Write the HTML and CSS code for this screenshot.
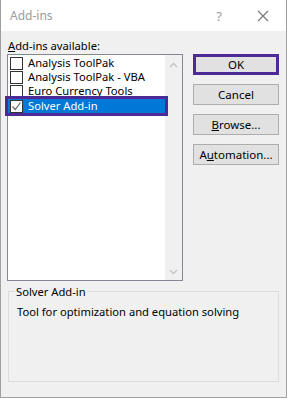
FILE: index.html
```html
<!DOCTYPE html>
<html lang="en">
  <head>
    <meta charset="utf-8" />
    <link rel="stylesheet" href="styles.css">
  </head>
  <body>
    <div class="dialog">
      <header class="titlebar">
        <span class="title">Add-ins</span>
        <span class="help">?</span>
        <svg class="close" width="12" height="12" viewBox="0 0 12 12">
          <path d="M1 1 L11 11 M11 1 L1 11" stroke="#777" stroke-width="1.2" fill="none" />
        </svg>
      </header>
      <main class="content">
        <div class="top">
          <section class="available">
            <div class="label"><u>A</u>dd-ins available:</div>
            <div class="listbox">
              <ul class="items">
                <li class="item"><span class="check"></span>Analysis ToolPak</li>
                <li class="item"><span class="check"></span>Analysis ToolPak - VBA</li>
                <li class="item"><span class="check"></span>Euro Currency Tools</li>
                <li class="item selected"><span class="check checked">
                  <svg width="11" height="11" viewBox="0 0 11 11"><path d="M1.5 5.5 L4.3 8.5 L9.5 1.5" stroke="#666" stroke-width="1.2" fill="none" /></svg>
                </span>Solver Add-in</li>
              </ul>
              <div class="scrollbar">
                <svg width="9" height="6" viewBox="0 0 9 6"><path d="M1 5 L4.5 1.5 L8 5" stroke="#c2c2c2" stroke-width="1.3" fill="none" /></svg>
                <svg width="9" height="6" viewBox="0 0 9 6"><path d="M1 1 L4.5 4.5 L8 1" stroke="#c2c2c2" stroke-width="1.3" fill="none" /></svg>
              </div>
            </div>
          </section>
          <div class="buttons">
            <button class="btn default">OK</button>
            <button class="btn">Cancel</button>
            <button class="btn"><u>B</u>rowse...</button>
            <button class="btn">A<u>u</u>tomation...</button>
          </div>
        </div>
        <fieldset class="group">
          <legend>Solver Add-in</legend>
          <p class="desc">Tool for optimization and equation solving</p>
        </fieldset>
      </main>
    </div>
    <div class="sheet"></div>
  </body>
</html>
```

FILE: styles.css
```css
body {
  margin: 0;
  background: #fff;
  font-family: "Noto Sans", "Open Sans", sans-serif;
  font-size: 11.2px;
  color: #000;
}

.dialog {
  width: 285px;
  height: 397px;
  border: 1px solid #a0a0a0;
  border-top: none;
  background: #f0f0f0;
  display: flex;
  flex-direction: column;
}

.titlebar {
  height: 31px;
  background: #fff;
  display: flex;
  align-items: center;
  padding: 0 0 0 9px;
}

.title {
  flex: 1;
  color: #9a9a9a;
  font-size: 12px;
}

.help {
  color: #9a9a9a;
  font-size: 13px;
  margin-right: 35px;
}

.close {
  margin-right: 17px;
}

.content {
  flex: 1;
  padding: 6px 6px 0 6px;
  display: flex;
  flex-direction: column;
}

.top {
  display: flex;
  gap: 10px;
}

.available {
  width: 176px;
}

.label {
  height: 17px;
  line-height: 17px;
  padding-left: 1px;
}

.listbox {
  height: 225px;
  border: 1px solid #828790;
  background: #fff;
  display: flex;
}

.items {
  flex: 1;
  list-style: none;
  margin: 0;
  padding: 1px 0 0 0;
}

.item {
  height: 14px;
  line-height: 14px;
  display: flex;
  align-items: center;
  padding-left: 2px;
  white-space: nowrap;
}

.item.selected {
  background: #0078d7;
  color: #fff;
  height: 14px;
  margin-top: 1px;
  outline: 3px solid #4d2a96;
  outline-offset: 0;
  position: relative;
}

.check {
  width: 11px;
  height: 11px;
  border: 1px solid #333;
  background: #fff;
  margin-right: 5px;
  flex: none;
  display: flex;
  align-items: center;
  justify-content: center;
}

.scrollbar {
  width: 17px;
  background: #f0f0f0;
  display: flex;
  flex-direction: column;
  justify-content: space-between;
  align-items: center;
  padding: 7px 0 5px;
}

.buttons {
  display: flex;
  flex-direction: column;
  gap: 9px;
  padding-top: 17px;
}

.btn {
  width: 86px;
  height: 21px;
  background: #e1e1e1;
  border: 1px solid #adadad;
  font: inherit;
  font-size: 11.5px;
  color: #000;
  padding: 0;
}

.btn.default {
  border: 3px solid #4d2a96;
}

.group {
  margin: 3px 1px 0 1px;
  height: 96px;
  border: 1px solid #dcdcdc;
  padding: 0 8px;
}

.group legend {
  padding: 0 1px;
  margin-left: -2px;
}

.desc {
  margin: 5px 0 0 0;
}

.sheet {
  height: 2px;
  background: #fff;
}
```
